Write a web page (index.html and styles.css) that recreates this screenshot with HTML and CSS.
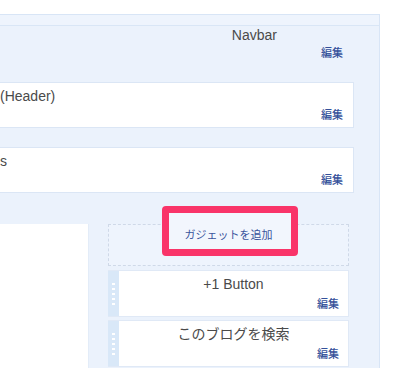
FILE: index.html
```html
<!DOCTYPE html>
<html lang="ja">
<head>
<meta charset="utf-8">
<link rel="stylesheet" href="styles.css">
</head>
<body>
<div class="page">
  <div class="panel">
    <div class="band"></div>
    <div class="navbar">
      <div class="nav-title">Navbar</div>
      <div class="nav-edit"><a class="edit">編集</a></div>
    </div>
    <div class="box">
      <div class="box-title">(Header)</div>
      <a class="edit">編集</a>
    </div>
    <div class="box box2">
      <div class="box-title">s</div>
      <a class="edit">編集</a>
    </div>
    <div class="columns">
      <div class="main-col"></div>
      <div class="side-col">
        <div class="add-zone">
          <a class="add-link">ガジェットを追加</a>
          <div class="highlight"></div>
        </div>
        <div class="widget">
          <div class="handle"><i></i><i></i><i></i><i></i><i></i></div>
          <div class="widget-body">
            <div class="widget-title">+1 Button</div>
            <a class="edit">編集</a>
          </div>
        </div>
        <div class="widget">
          <div class="handle"><i></i><i></i><i></i><i></i><i></i></div>
          <div class="widget-body">
            <div class="widget-title">このブログを検索</div>
            <a class="edit">編集</a>
          </div>
        </div>
      </div>
    </div>
  </div>
</div>
</body>
</html>
```

FILE: styles.css
```css
html, body {
  margin: 0;
  padding: 0;
  background: #ffffff;
}
body {
  width: 413px;
  height: 368px;
  overflow: hidden;
  font-family: "Liberation Sans", "Noto Sans CJK JP", sans-serif;
  color: #4a4a4a;
}
.page {
  padding-top: 14px;
}
.panel {
  margin-left: -21px;
  width: 400px;
  height: 360px;
  background: #ebf2fc;
  border-top: 1px solid #d8e5f6;
  border-right: 1px solid #d8e5f6;
}
.band {
  height: 10px;
  background: #eef4fd;
  border-bottom: 1px solid #d9e6f6;
}
.navbar {
  height: 56px;
  padding-right: 36px;
}
.nav-title {
  text-align: right;
  padding-right: 66px;
  font-size: 14px;
  line-height: 16px;
  padding-top: 1px;
}
.nav-edit {
  text-align: right;
  padding-top: 0;
}
.edit {
  font-family: "Noto Sans CJK JP", sans-serif;
  font-size: 11px;
  line-height: 14px;
  color: #34509a;
  font-weight: 500;
  text-align: right;
}
.box {
  width: 375px;
  height: 46px;
  background: #ffffff;
  border: 1px solid #dbe6f5;
  display: flex;
  flex-direction: column;
  padding: 0 10px 0 0;
  box-sizing: border-box;
  margin-bottom: 19px;
}
.box .edit {
  margin-top: auto;
  padding-bottom: 6px;
}
.box-title {
  font-size: 14px;
  line-height: 16px;
  padding-top: 5px;
  padding-left: 20px;
}
.box2 {
  margin-bottom: 31px;
}
.columns {
  display: flex;
  align-items: flex-start;
}
.main-col {
  width: 110px;
  height: 150px;
  background: #ffffff;
  border-right: 1px solid #e3ecf8;
  box-sizing: border-box;
  margin-right: 19px;
}
.side-col {
  width: 241px;
  display: flex;
  flex-direction: column;
  gap: 3px;
}
.add-zone {
  position: relative;
  height: 40px;
  border: 1px dashed #cfd9e8;
  background: #eef4fd;
  display: flex;
  justify-content: center;
  align-items: flex-start;
  margin-bottom: 1px;
}
.add-link {
  font-family: "Noto Sans CJK JP", sans-serif;
  font-size: 11px;
  line-height: 14px;
  color: #3a549c;
  margin-top: 2px;
  position: relative;
  z-index: 2;
}
.highlight {
  position: absolute;
  left: 53px;
  top: -19px;
  width: 122px;
  height: 36px;
  border: 7px solid #f93469;
  border-radius: 4px;
  background: #f2f6fd;
  z-index: 1;
}
.widget {
  display: flex;
  height: 47px;
  background: #ffffff;
  border: 1px solid #e0e9f6;
  border-left: none;
  box-sizing: border-box;
}
.handle {
  width: 11px;
  background: #d9e8f8;
  display: flex;
  flex-direction: column;
  gap: 3px;
  padding: 12px 0 0 4px;
  box-sizing: border-box;
}
.handle i {
  display: block;
  width: 3px;
  height: 2px;
  background: #ffffff;
}
.widget-body {
  flex: 1;
  display: flex;
  flex-direction: column;
  padding-right: 9px;
}
.widget-title {
  font-family: "Liberation Sans", "Noto Sans CJK JP", sans-serif;
  font-size: 14px;
  line-height: 16px;
  text-align: center;
  padding-top: 5px;
  padding-left: 9px;
}
.widget-body .edit {
  margin-top: auto;
  padding-bottom: 6px;
}
```
